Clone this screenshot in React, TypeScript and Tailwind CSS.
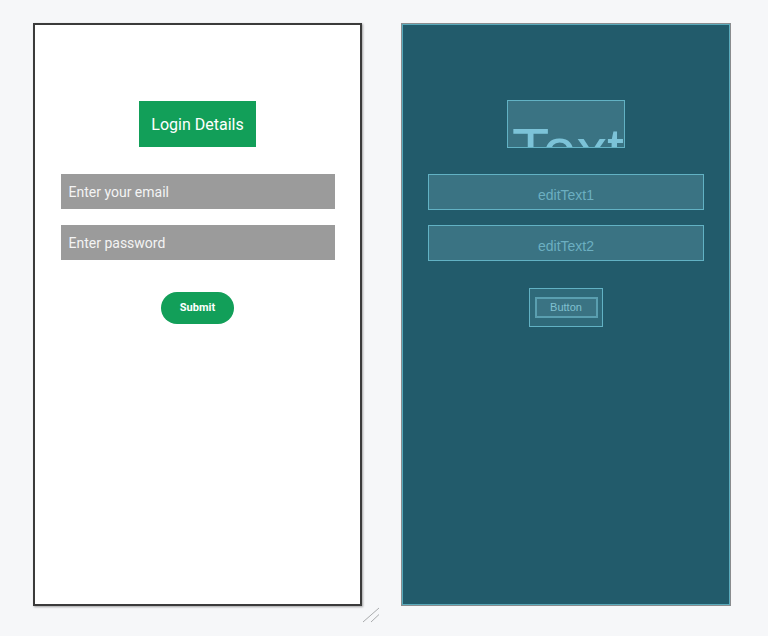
import React from "react";

export default function App() {
  return (
    <div className="relative w-[768px] h-[636px] bg-[#f6f7f9] overflow-hidden">
      <div className="flex gap-[39px] pt-[23px] pl-[33px]">
        {/* Design view */}
        <div
          className="box-border w-[329px] h-[583px] border-2 border-[#3b3b3b] bg-white shadow-[1px_1px_2px_rgba(0,0,0,0.35)] flex flex-col items-center pt-[76px]"
          style={{ fontFamily: "Roboto, 'Noto Sans', sans-serif" }}
        >
          <div className="w-[117px] h-[46px] bg-[#129f59] text-white text-[16px] flex items-center justify-center pt-[2px]">
            Login Details
          </div>
          <div className="mt-[27px] w-[274px] h-[35px] bg-[#9b9b9b] text-[#f4f4f4] text-[14px] pl-[8px] pt-[1px] flex items-center">
            Enter your email
          </div>
          <div className="mt-[16px] w-[274px] h-[35px] bg-[#9b9b9b] text-[#f4f4f4] text-[14px] pl-[8px] pt-[1px] flex items-center">
            Enter password
          </div>
          <div className="mt-[32px] w-[73px] h-[32px] rounded-full bg-[#129f59] text-white text-[11px] font-bold flex items-center justify-center">
            Submit
          </div>
        </div>

        {/* Blueprint view */}
        <div
          className="box-border w-[330px] h-[583px] border border-[#8a8c8e] bg-[#225b6b] shadow-[inset_0_0_0_1px_#5aaabb] flex flex-col items-center pt-[76px]"
          style={{ fontFamily: "'Liberation Sans', Arial, sans-serif" }}
        >
          <div className="box-border w-[118px] h-[48px] border border-[#62b2c4] bg-[#3a7383] overflow-hidden whitespace-nowrap pl-[4px] pt-[19px] text-[61px] leading-none text-[#7cc3d8]">
            Text
          </div>
          <div className="box-border mt-[26px] w-[276px] h-[36px] border border-[#62b2c4] bg-[#3a7383] text-[#6cafc1] text-[14px] flex items-center justify-center pt-[7px]">
            editText1
          </div>
          <div className="box-border mt-[15px] w-[276px] h-[36px] border border-[#62b2c4] bg-[#3a7383] text-[#6cafc1] text-[14px] flex items-center justify-center pt-[7px]">
            editText2
          </div>
          <div className="box-border mt-[27px] w-[74px] h-[39px] border border-[#62b2c4] bg-[#2f6a7a] flex items-center justify-center">
            <div className="box-border w-[63px] h-[21px] border-2 border-[#5a9fb0] bg-[#3a7383] text-[#80c0d0] text-[11px] flex items-center justify-center">
              Button
            </div>
          </div>
        </div>
      </div>

      {/* Resize handle */}
      <svg
        className="absolute left-[362px] top-[606px]"
        width="18"
        height="18"
        viewBox="0 0 18 18"
      >
        <line x1="1" y1="16" x2="17" y2="2" stroke="#a9abad" strokeWidth="1" />
        <line x1="9" y1="16" x2="17" y2="8.5" stroke="#a9abad" strokeWidth="1" />
      </svg>
    </div>
  );
}
